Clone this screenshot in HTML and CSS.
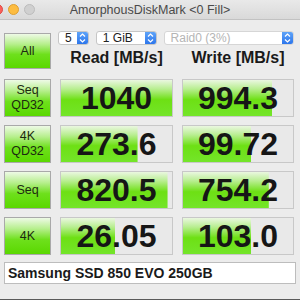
FILE: index.html
```html
<!DOCTYPE html>
<html lang="en">
<head>
    <meta charset="UTF-8">
    <title>AmorphousDiskMark</title>
    <link rel="stylesheet" href="styles.css">
</head>
<body>
    <div class="window">
        <div class="titlebar">
            <div class="lights">
                <span class="light red"></span>
                <span class="light yellow"></span>
                <span class="light gray"></span>
            </div>
            <div class="title">AmorphousDiskMark &lt;0 Fill&gt;</div>
        </div>

        <div class="content">
            <div class="grid">
                <div class="btn btn-all">All</div>
                <div class="top">
                    <div class="selects">
                        <div class="select sel-count"><span class="val">5</span><span class="arrow"><svg width="7" height="10" viewBox="0 0 7 10"><path d="M1 3.5 L3.5 1 L6 3.5 M1 6.5 L3.5 9 L6 6.5" fill="none" stroke="#fff" stroke-width="1.2"/></svg></span></div>
                        <div class="select sel-size"><span class="val">1 GiB</span><span class="arrow"><svg width="7" height="10" viewBox="0 0 7 10"><path d="M1 3.5 L3.5 1 L6 3.5 M1 6.5 L3.5 9 L6 6.5" fill="none" stroke="#fff" stroke-width="1.2"/></svg></span></div>
                        <div class="select sel-drive disabled"><span class="val">Raid0 (3%)</span><span class="arrow"><svg width="7" height="10" viewBox="0 0 7 10"><path d="M1 3.5 L3.5 1 L6 3.5 M1 6.5 L3.5 9 L6 6.5" fill="none" stroke="#fff" stroke-width="1.2"/></svg></span></div>
                    </div>
                    <div class="heads">
                        <div class="head">Read [MB/s]</div>
                        <div class="head">Write [MB/s]</div>
                    </div>
                </div>

                <div class="btn">Seq<br>QD32</div>
                <div class="cell" style="--fill: 100%">1040</div>
                <div class="cell" style="--fill: 81%">994.3</div>

                <div class="btn">4K<br>QD32</div>
                <div class="cell" style="--fill: 69%">273.6</div>
                <div class="cell" style="--fill: 62%">99.72</div>

                <div class="btn">Seq</div>
                <div class="cell" style="--fill: 96%">820.5</div>
                <div class="cell" style="--fill: 78%">754.2</div>

                <div class="btn">4K</div>
                <div class="cell" style="--fill: 49%">26.05</div>
                <div class="cell" style="--fill: 62%">103.0</div>
            </div>

            <div class="comment">Samsung SSD 850 EVO 250GB</div>
        </div>
    </div>
</body>
</html>
```

FILE: styles.css
```css
body {
    margin: 0;
    font-family: "Liberation Sans", Arial, sans-serif;
    background: #ececec;
}
.window {
    width: 300px;
    height: 299px;
    background: #ececec;
    border-bottom: 1px solid #5a5a5a;
    overflow: hidden;
}
.titlebar {
    height: 19px;
    display: flex;
    align-items: center;
    justify-content: center;
    background: linear-gradient(#e9e9e9, #d9d9d9);
    border-bottom: 1px solid #c2c2c2;
    position: relative;
}
.lights {
    position: absolute;
    left: -8px;
    top: 4px;
    display: flex;
    gap: 5px;
}
.light {
    width: 11px;
    height: 11px;
    border-radius: 50%;
    box-sizing: border-box;
}
.red { background: #fc605b; border: 1px solid #de4a44; }
.yellow { background: #fdbc40; border: 1px solid #dea033; }
.gray { background: #d0d0d0; border: 1px solid #bcbcbc; }
.title {
    font-size: 12.5px;
    color: #4a4a4a;
}
.content {
    padding: 11px 4px 0;
}
.grid {
    display: grid;
    grid-template-columns: 47px 113px 112px;
    grid-template-rows: 40px repeat(4, 38px);
    column-gap: 9px;
    row-gap: 8px;
}
.btn {
    box-sizing: border-box;
    border: 1px solid #a9a9a9;
    background: linear-gradient(#eefae6 0%, #b6ef8c 30%, #6ee01c 60%, #5ad800 100%);
    display: flex;
    align-items: center;
    justify-content: center;
    text-align: center;
    font-size: 12.5px;
    line-height: 15px;
    color: #1c2a10;
}
.btn-all {
    margin-top: 2px;
    height: 36px;
}
.top {
    grid-column: 2 / 4;
    display: flex;
    flex-direction: column;
}
.selects {
    display: flex;
    gap: 7px;
    margin-left: -2px;
}
.select {
    box-sizing: border-box;
    height: 14px;
    background: #fff;
    border: 1px solid #c6c6c6;
    border-radius: 3px;
    display: flex;
    align-items: center;
    justify-content: space-between;
    font-size: 12px;
    color: #222;
    overflow: hidden;
}
.select .val {
    padding-left: 6px;
}
.select .arrow {
    width: 11px;
    height: 100%;
    background: linear-gradient(#5ea3f8, #2c76ec);
    display: flex;
    align-items: center;
    justify-content: center;
}
.sel-count { width: 31px; }
.sel-size { width: 61px; }
.sel-drive { width: 131px; }
.disabled .val { color: #b5b5b5; }
.disabled { border-color: #d6d6d6; }
.heads {
    display: grid;
    grid-template-columns: 113px 112px;
    column-gap: 9px;
    margin-top: 4px;
}
.head {
    text-align: center;
    font-size: 16px;
    font-weight: bold;
    color: #1a1a1a;
}
.cell {
    box-sizing: border-box;
    border: 1px solid #c8c8c8;
    background-color: #e9e9e9;
    background-image: linear-gradient(#eaf7e0 0%, #b8ee90 25%, #6de014 55%, #74e52a 100%);
    background-repeat: no-repeat;
    background-size: var(--fill) 100%;
    display: flex;
    align-items: center;
    justify-content: center;
    font-size: 32px;
    font-weight: bold;
    color: #161616;
}
.comment {
    box-sizing: border-box;
    margin-top: 7px;
    height: 22px;
    background: #fff;
    border: 1px solid #bdbdbd;
    padding-left: 3px;
    display: flex;
    align-items: center;
    font-size: 14px;
    font-weight: bold;
    color: #1a1a1a;
}
```
